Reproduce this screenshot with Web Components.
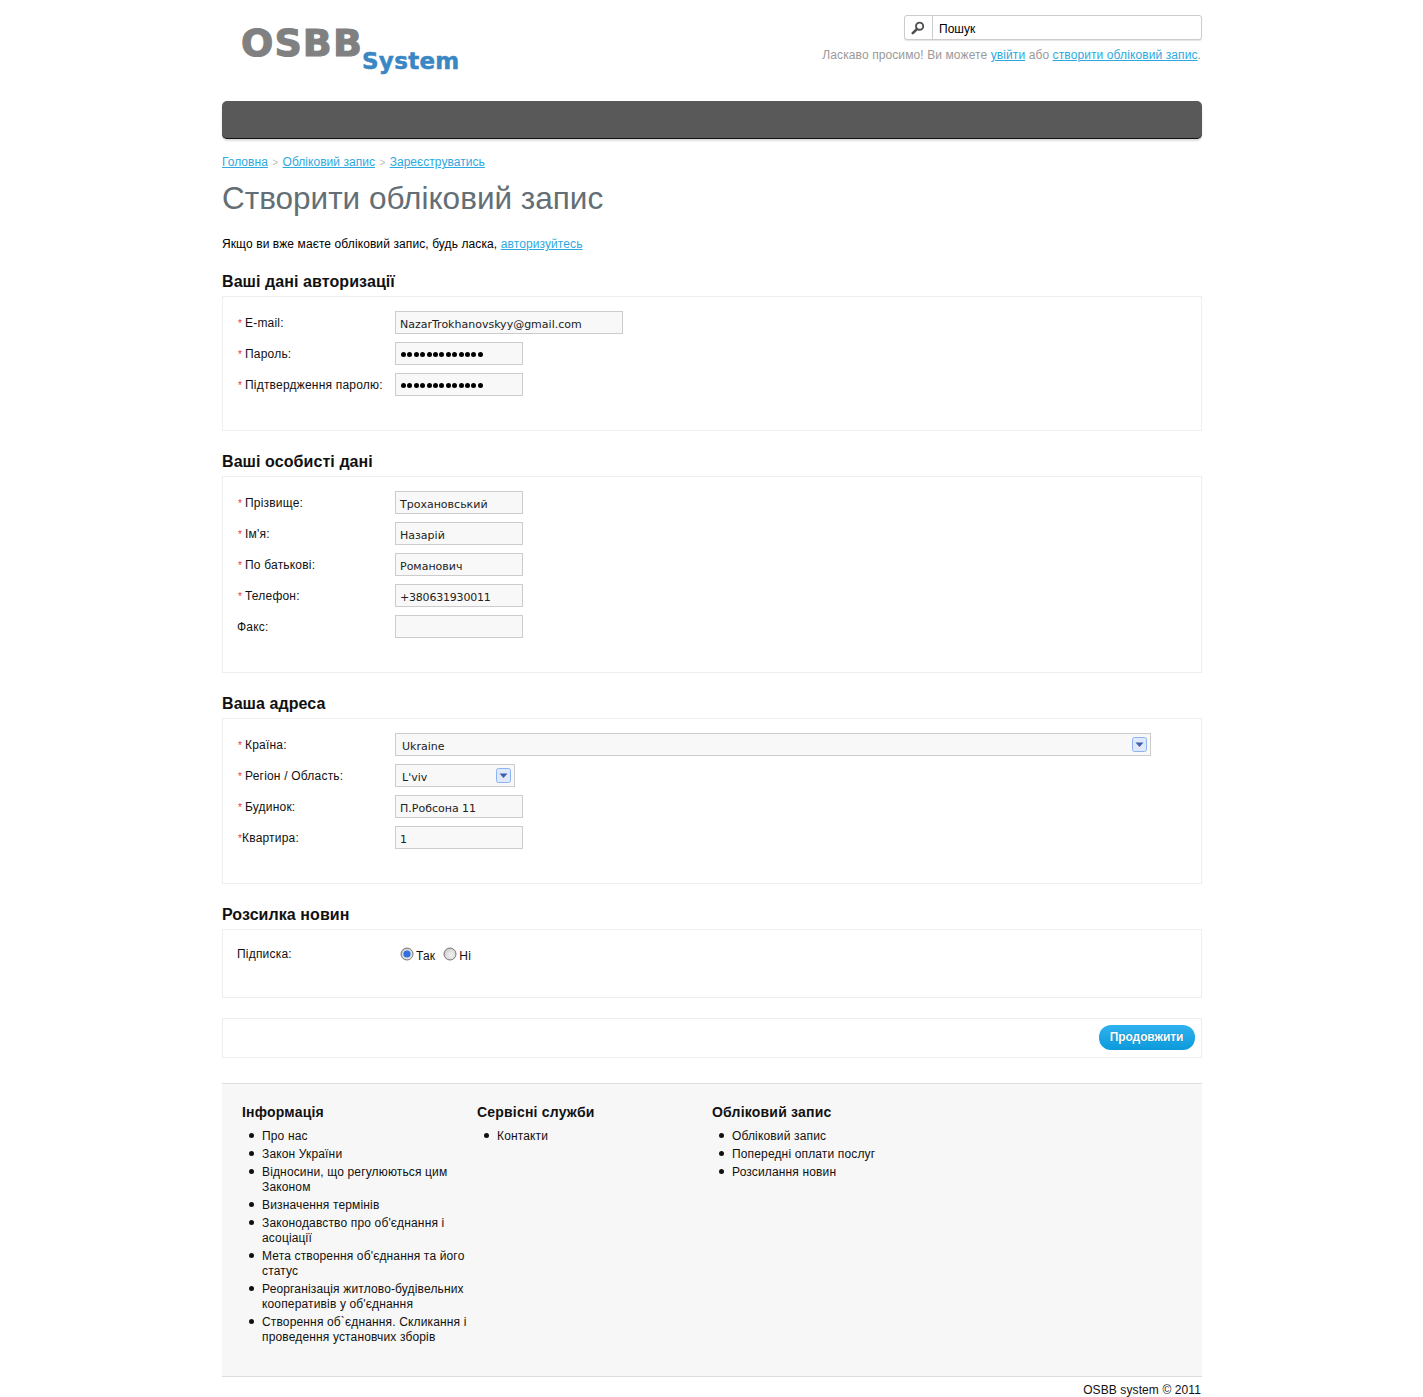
<!DOCTYPE html>
<html lang="uk"><head><meta charset="utf-8"><title>Створити обліковий запис</title>
<style>
html,body{margin:0;padding:0;background:#fff}
body{font:12px/15px "Liberation Sans",Arial,sans-serif;color:#000}
os-page{display:block;width:980px;margin-left:222px}
</style></head><body>
<os-page>
  <os-header></os-header>
  <os-nav></os-nav>
  <os-crumbs></os-crumbs>
  <os-title>Створити обліковий запис</os-title>
  <os-intro></os-intro>
  <os-section heading="Ваші дані авторизації">
    <os-row label="E-mail:" req><os-input wide value="NazarTrokhanovskyy@gmail.com"></os-input></os-row>
    <os-row label="Пароль:" req><os-input dots></os-input></os-row>
    <os-row label="Підтвердження паролю:" req><os-input dots></os-input></os-row>
  </os-section>
  <os-section heading="Ваші особисті дані">
    <os-row label="Прізвище:" req><os-input value="Трохановський"></os-input></os-row>
    <os-row label="Ім'я:" req><os-input value="Назарій"></os-input></os-row>
    <os-row label="По батькові:" req><os-input value="Романович"></os-input></os-row>
    <os-row label="Телефон:" req><os-input style="letter-spacing:-.2px" value="+380631930011"></os-input></os-row>
    <os-row label="Факс:"><os-input value=""></os-input></os-row>
  </os-section>
  <os-section heading="Ваша адреса">
    <os-row label="Країна:" req><os-select style="width:756px" value="Ukraine"></os-select></os-row>
    <os-row label="Регіон / Область:" req><os-select style="width:120px" value="L'viv"></os-select></os-row>
    <os-row label="Будинок:" req><os-input value="П.Робсона 11"></os-input></os-row>
    <os-row label="Квартира:" req tight><os-input value="1"></os-input></os-row>
  </os-section>
  <os-section heading="Розсилка новин" short>
    <os-row label="Підписка:" short><os-radios></os-radios></os-row>
  </os-section>
  <os-actions></os-actions>
  <os-footer></os-footer>
  <os-copy>OSBB system © 2011</os-copy>
</os-page>
<script>
function def(name, css, html){
  customElements.define(name, class extends HTMLElement{
    connectedCallback(){
      if(this.shadowRoot) return;
      const r=this.attachShadow({mode:"open"});
      const h=typeof html==="function"?html(this):html;
      r.innerHTML="<style>"+css+"</style>"+h;
    }
  });
}
const link='a{color:#2ea9e0;text-decoration:underline}';
def("os-header",`
:host{display:flex;justify-content:space-between;height:101px}
.logo{padding:18px 0 0 19px;font-family:"DejaVu Sans",sans-serif;font-weight:bold;display:flex;align-items:flex-start}
.o{font-size:38px;line-height:50px;color:#808080;letter-spacing:1.1px;-webkit-text-stroke:1.1px #808080}
.s{font-size:23px;line-height:30px;color:#3a87c4;margin:28px 0 0 -1px;letter-spacing:.3px;-webkit-text-stroke:.5px #3a87c4}
.r{display:flex;flex-direction:column;align-items:flex-end;padding-top:15px}
.search{width:296px;height:23px;border:1px solid #ccc;border-radius:3px;display:flex;box-shadow:0 1px 1px #e4e4e4;background:#fff}
.i{width:28px;border-right:1px solid #ccc;display:flex;align-items:center;justify-content:center;padding-right:2px;box-sizing:border-box}
.t{padding:6px 0 0 6px}
.w{margin-top:8px;color:#999;padding-right:1px;letter-spacing:.1px}
${link}`,`
<div class="logo"><span class="o">OSBB</span><span class="s">System</span></div>
<div class="r"><div class="search"><div class="i"><svg width="14" height="14" viewBox="0 0 14 14"><circle cx="8.6" cy="5.2" r="3.6" fill="none" stroke="#4f4f4f" stroke-width="1.9"/><path d="M6 8 1.8 12.2" stroke="#4f4f4f" stroke-width="2.6" stroke-linecap="round"/></svg></div><div class="t">Пошук</div></div>
<div class="w">Ласкаво просимо! Ви можете <a href="#">увійти</a> або <a href="#">створити обліковий запис</a>.</div></div>`);
def("os-nav",`:host{display:block;box-sizing:border-box;height:38px;background:#595959;border-bottom:1px solid #111;border-radius:5px;box-shadow:0 2px 2px #ddd}`,``);
def("os-crumbs",`
:host{display:block;padding-top:16px;height:15px;color:#bbb;letter-spacing:.04px}
.b{font-size:10px;margin:0 1px}
${link}`,`<a href="#">Головна</a> <span class="b">&gt;</span> <a href="#">Обліковий запис</a> <span class="b">&gt;</span> <a href="#">Зареєструватись</a>`);
def("os-title",`:host{display:block;font-size:31.5px;line-height:36px;color:#636e75;margin-top:10px;height:36px}`,`<slot></slot>`);
def("os-intro",`:host{display:block;margin-top:21px;height:15px;letter-spacing:.1px}
${link}`,`Якщо ви вже маєте обліковий запис, будь ласка, <a href="#">авторизуйтесь</a>`);
def("os-section",`
:host{display:block;margin-bottom:20px}
:host(:first-of-type){margin-top:19px}
h2{margin:0 0 4px;font-size:16px;line-height:21px;font-weight:bold;color:#111;letter-spacing:.08px}
.box{border:1px solid #eee;padding:14px 14px 26px}
`,el=>`<h2>${el.getAttribute("heading")}</h2><div class="box"><slot></slot></div>`);
def("os-row",`
:host{display:flex;margin-bottom:8px;height:23px}
:host([short]){height:19px}
.l{width:158px;flex:none;padding-top:5px;color:#111;display:flex;align-items:flex-start;letter-spacing:.2px}
:host([short]) .l{padding-top:3px}
.s{color:#e33;font-size:10px;width:7px;margin-left:1px;flex:none}
:host([tight]) .s{width:4px}
`,el=>`<div class="l">${el.hasAttribute("req")?'<span class="s">*</span>':''}<span>${el.getAttribute("label")}</span></div><slot></slot>`);
const field=`box-sizing:border-box;height:23px;border:1px solid #ccc;background:#f8f8f8;font:11px/15px "DejaVu Sans",sans-serif;color:#222;display:block;white-space:nowrap;overflow:hidden;`;
def("os-input",`
:host{${field}width:128px;padding:5px 4px 0}
:host([wide]){width:228px}
.d{display:flex;gap:1.4px;padding:4px 0 0 1px}
.d i{flex:none;width:5px;height:5px;border-radius:50%;background:#000}
`,el=>el.hasAttribute("dots")?`<div class="d" role="img" aria-label="password">${"<i></i>".repeat(13)}</div>`:(el.getAttribute("value")||""));
def("os-select",`
:host{${field}padding:5px 6px 0;position:relative}
svg{position:absolute;right:3px;top:3px}
`,el=>`${el.getAttribute("value")}<svg width="15" height="15" viewBox="0 0 15 15"><rect x=".5" y=".5" width="14" height="14" rx="2" fill="#dfe9fb" stroke="#8db2f2"/><path d="M3.5 5.5h8L7.5 10z" fill="#3f5fa8"/></svg>`);
const radio=(on)=>`<svg width="14" height="14" viewBox="0 0 14 14"><defs><radialGradient id="g${on?1:0}" cx=".6" cy=".6" r=".7"><stop offset="0" stop-color="#f2f2f2"/><stop offset=".6" stop-color="#dcdcdc"/><stop offset="1" stop-color="#bbb"/></radialGradient></defs><circle cx="7" cy="7" r="6" fill="url(#g${on?1:0})" stroke="#777"/>${on?'<circle cx="7" cy="7" r="3.6" fill="#2f6fe0"/>':''}</svg>`;
def("os-radios",`
:host{display:flex;align-items:flex-start;padding-left:5px;color:#111;letter-spacing:.2px}
svg{flex:none;margin-top:3px}
span{margin:5px 8px 0 2px}
span:last-child{margin-right:0}
`,`${radio(true)}<span>Так</span>${radio(false)}<span>Ні</span>`);
def("os-actions",`
:host{display:flex;justify-content:flex-end;box-sizing:border-box;height:40px;border:1px solid #eee;padding:6px 6px 0;margin-bottom:25px}
.b{box-sizing:border-box;width:96px;height:25px;border-radius:12px;padding-right:1px;background:linear-gradient(#2fb2ef,#0c9adb);color:#fff;font-weight:bold;text-align:center;line-height:25px;letter-spacing:-.1px;text-shadow:0 0 1px #0a6fa0}
`,`<div class="b">Продовжити</div>`);
const cols=[["Інформація",["Про нас","Закон України","Відносини, що регулюються цим Законом","Визначення термінів","Законодавство про об'єднання і асоціації","Мета створення об'єднання та його статус","Реорганізація житлово-будівельних кооперативів у об'єднання","Створення об`єднання. Скликання і проведення установчих зборів"]],["Сервісні служби",["Контакти"]],["Обліковий запис",["Обліковий запис","Попередні оплати послуг","Розсилання новин"]]];
def("os-footer",`
:host{display:flex;box-sizing:border-box;height:294px;background:#f7f7f7;border-top:1px solid #ddd;border-bottom:1px solid #ddd;padding:20px 0 0 20px}
section{width:235px;flex:none;color:#111}
h3{margin:0 0 8px;font-size:14px;line-height:17px;font-weight:bold;color:#111;letter-spacing:.2px}
ul{margin:0;padding:0 0 0 20px;width:209px;list-style:none;letter-spacing:.15px}
li{margin-bottom:3px;line-height:15px}
li::before{content:"";display:inline-block;width:5px;height:5px;border-radius:50%;background:#111;margin:0 8px 2px -13px;vertical-align:middle}
`,cols.map(c=>`<section><h3>${c[0]}</h3><ul>${c[1].map(t=>`<li>${t}</li>`).join("")}</ul></section>`).join(""));
def("os-copy",`:host{display:block;text-align:right;padding:6px 1px 0 0;height:14px;color:#111;letter-spacing:.1px}`,`<slot></slot>`);
</script>
</body></html>
